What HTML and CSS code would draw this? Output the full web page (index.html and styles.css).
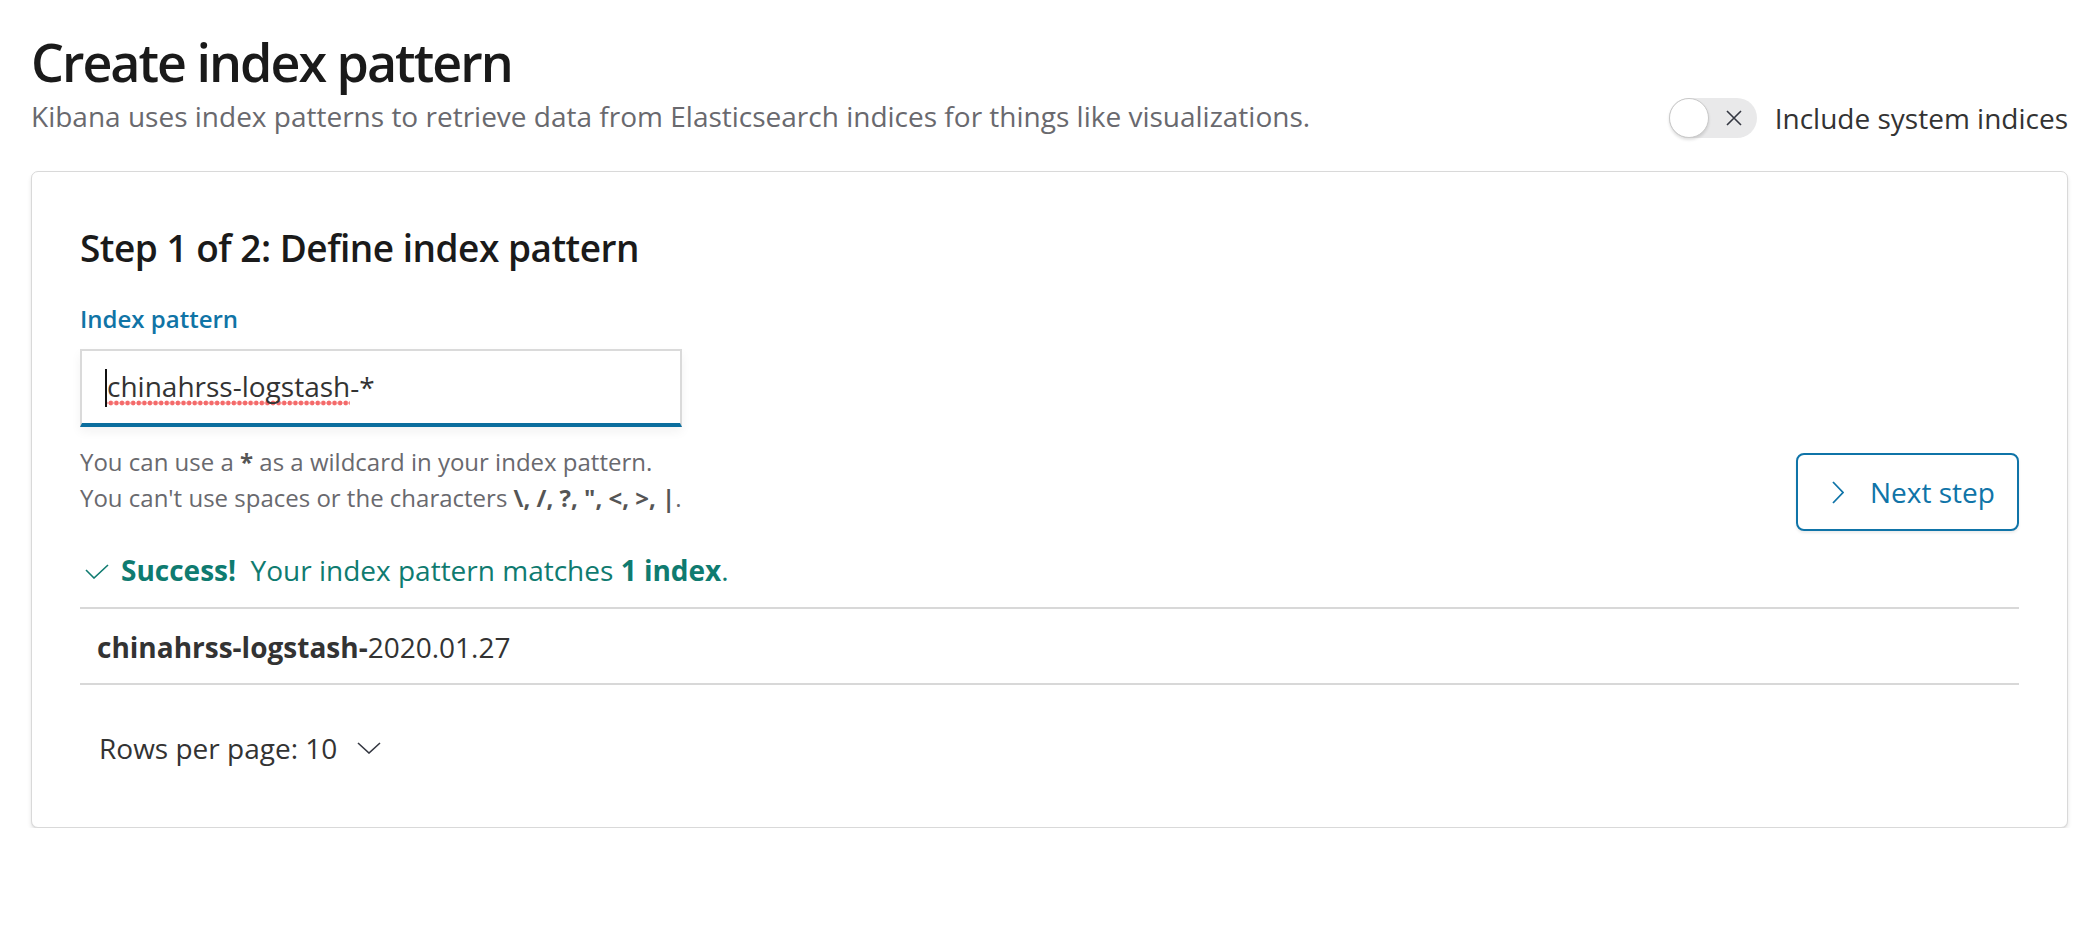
FILE: index.html
```html
<!DOCTYPE html>
<html lang="en">
<head>
<meta charset="utf-8">
<title>Create index pattern</title>
<link rel="stylesheet" href="styles.css">
</head>
<body>
<div class="page">
  <h1 class="title">Create index pattern</h1>
  <div class="subrow">
    <p class="subtitle">Kibana uses index patterns to retrieve data from Elasticsearch indices for things like visualizations.</p>
    <div class="switch">
      <span class="switch-track">
        <span class="switch-knob"></span>
        <svg class="switch-x" width="18" height="18" viewBox="0 0 18 18"><path d="M2 2 L16 16 M16 2 L2 16" stroke="#343741" stroke-width="1.6" fill="none"/></svg>
      </span>
      <span class="switch-label">Include system indices</span>
    </div>
  </div>

  <section class="panel">
    <h2 class="step-title">Step 1 of 2: Define index pattern</h2>
    <div class="form-row">
      <div class="form-left">
        <div class="label">Index pattern</div>
        <div class="input"><span class="caret"></span><span class="spell">chinahrss-logstash</span>-*</div>
        <div class="help">
          <div>You can use a <strong>*</strong> as a wildcard in your index pattern.</div>
          <div>You can't use spaces or the characters <strong>\, /, ?, ", &lt;, &gt;, |</strong>.</div>
        </div>
      </div>
      <button class="next-btn">
        <svg class="chev-right" width="12" height="23" viewBox="0 0 12 23"><path d="M1 1 L11 11.5 L1 22" stroke="#0f74a8" stroke-width="1.8" fill="none"/></svg>
        <span>Next step</span>
      </button>
    </div>

    <div class="success">
      <svg class="check" width="24" height="15" viewBox="0 0 24 15"><path d="M1 6 L9 14 L23 1" stroke="#0f7b70" stroke-width="1.6" fill="none"/></svg>
      <span><strong>Success!</strong>&nbsp; Your index pattern matches <strong>1 index</strong>.</span>
    </div>

    <table class="table">
      <tbody>
        <tr><td><strong>chinahrss-logstash-</strong>2020.01.27</td></tr>
      </tbody>
    </table>

    <div class="pagination">
      <span>Rows per page: 10</span>
      <svg class="chev-down" width="24" height="12" viewBox="0 0 24 12"><path d="M1 1 L12 11 L23 1" stroke="#343741" stroke-width="1.6" fill="none"/></svg>
    </div>
  </section>
</div>
</body>
</html>
```

FILE: styles.css
```css
* { box-sizing: border-box; }
html, body { margin: 0; padding: 0; background: #fff; }
body {
  font-family: "Open Sans", "Noto Sans", sans-serif;
  color: #333;
}
.page {
  padding: 32px 26px 0 31px;
}
.title {
  margin: 0;
  font-size: 52px;
  line-height: 60px;
  font-weight: 600;
  color: #1a1a1a;
  letter-spacing: -2px;
}
.subrow {
  margin-top: 6px;
  display: flex;
  justify-content: space-between;
  align-items: flex-start;
}
.subtitle {
  margin: 0;
  font-size: 28px;
  line-height: 36px;
  color: #69696e;
}
.switch {
  display: flex;
  align-items: center;
  gap: 18px;
  height: 40px;
}
.switch-track {
  position: relative;
  width: 88px;
  height: 40px;
  border-radius: 20px;
  background: #e9e9ea;
  display: block;
}
.switch-knob {
  position: absolute;
  left: 0;
  top: 0;
  width: 40px;
  height: 40px;
  border-radius: 50%;
  background: #fff;
  border: 1.5px solid #c9c9c9;
  box-shadow: 0 2px 3px rgba(0,0,0,0.12);
}
.switch-x {
  position: absolute;
  left: 56px;
  top: 11px;
}
.switch-label {
  font-size: 28px;
  line-height: 36px;
  color: #333;
}
.panel {
  margin-top: 33px;
  border: 1px solid #d9d9d9;
  border-radius: 7px;
  padding: 54px 48px 61px 48px;
  box-shadow: 0 3px 4px rgba(0,0,0,0.1), 0 1px 1px rgba(0,0,0,0.05);
  background: #fff;
}
.step-title {
  margin: 0;
  font-size: 37px;
  line-height: 44px;
  font-weight: 600;
  color: #1a1a1a;
  letter-spacing: -0.5px;
}
.form-row {
  margin-top: 35px;
  display: flex;
  justify-content: space-between;
  align-items: flex-start;
}
.label {
  font-size: 24px;
  line-height: 28px;
  font-weight: 600;
  color: #1074a6;
  margin-bottom: 16px;
}
.input {
  width: 602px;
  height: 78px;
  border: 2px solid #dadada;
  border-bottom: 4px solid #0b6e9e;
  background: #fff;
  padding-left: 23px;
  display: flex;
  align-items: center;
  font-size: 28px;
  line-height: 36px;
  color: #333;
  box-shadow: 0 5px 10px rgba(0,0,0,0.05);
}
.caret {
  display: inline-block;
  width: 2px;
  height: 38px;
  background: #111;
  margin-top: 2px;
}
.spell {
  padding-bottom: 2px;
  background-image: radial-gradient(circle at center, #f46a6a 0, #f46a6a 2px, rgba(244,106,106,0) 2.8px);
  background-size: 5.6px 6px;
  background-repeat: repeat-x;
  background-position: 1px 100%;
}
.help {
  margin-top: 17px;
  font-size: 24px;
  line-height: 36px;
  color: #69696e;
}
.help strong { color: #555; }
.next-btn {
  margin-top: 148px;
  width: 223px;
  height: 78px;
  border: 2px solid #0f74a8;
  border-radius: 8px;
  background: #fff;
  display: flex;
  align-items: center;
  padding: 0 0 0 34px;
  gap: 26px;
  font-family: inherit;
  font-size: 28px;
  color: #0f74a8;
  box-shadow: 0 2px 3px rgba(0,0,0,0.08);
  cursor: pointer;
}
.success {
  margin-top: 21px;
  display: flex;
  align-items: center;
  gap: 12px;
  padding-left: 5px;
  font-size: 28px;
  line-height: 36px;
  color: #0f7b70;
}
.check { margin-top: 2px; }
.table {
  margin-top: 19px;
  width: 100%;
  border-collapse: collapse;
}
.table td {
  border-top: 2px solid #d8d8d8;
  border-bottom: 2px solid #d8d8d8;
  padding: 20px 17px 18px;
  font-size: 28px;
  line-height: 36px;
  color: #333;
}
.pagination {
  margin-top: 45px;
  padding-left: 19px;
  display: flex;
  align-items: center;
  gap: 20px;
  font-size: 28px;
  line-height: 36px;
  color: #333;
}
```
